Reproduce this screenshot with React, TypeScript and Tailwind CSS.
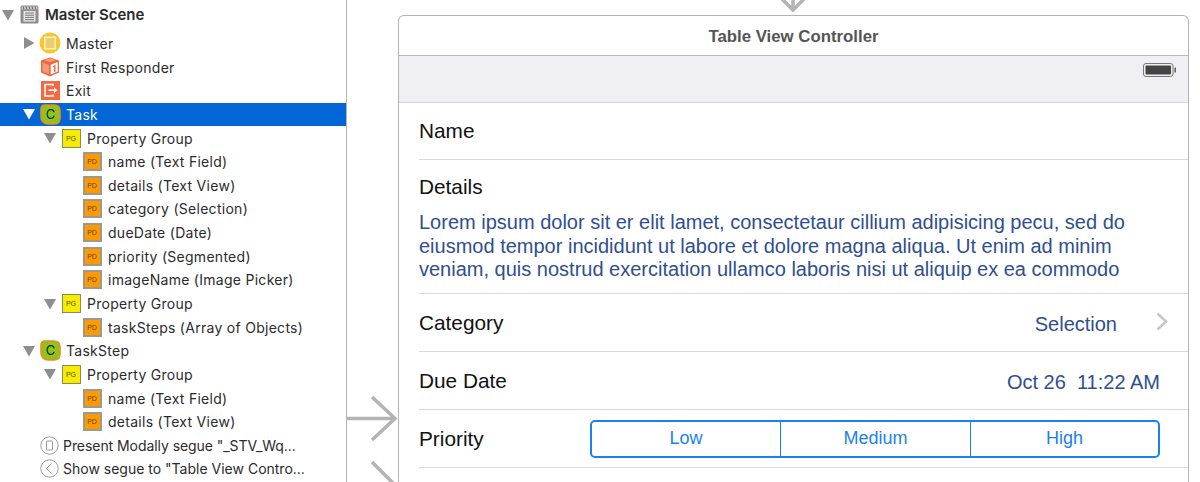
import type { ReactNode } from "react";

type RowProps = { indent: number; arrow?: "down" | "right"; light?: boolean; icon: ReactNode; label: string; selected?: boolean; bold?: boolean };

function Arrow({ dir, light }: { dir: "down" | "right"; light?: boolean }) {
  const fill = light ? "#ffffff" : "#8e8e8e";
  return (
    <svg width="12" height="12" viewBox="0 0 12 12" className="shrink-0">
      {dir === "down" ? <path d="M0 1H12L6 11.5Z" fill={fill} /> : <path d="M1 0V12L11.5 6Z" fill={fill} />}
    </svg>
  );
}

function SceneIcon() {
  return (
    <svg width="19" height="19" viewBox="0 0 19 19">
      <rect x="0.5" y="0.5" width="18" height="18" rx="1.5" fill="#8d8d8d" />
      <path d="M1.5 1.5h16v3h-16z" fill="#c9c9c9" />
      <path d="M3 1.5l1 3M6 1.5l1 3M9 1.5l1 3M12 1.5l1 3M15 1.5l1 3" stroke="#666" strokeWidth="1" />
      <rect x="3.5" y="6" width="12" height="10.5" fill="#e6e6e6" />
      <path d="M5 8h9M5 10.2h9M5 12.4h9M5 14.6h9" stroke="#777" strokeWidth="1" />
    </svg>
  );
}

function MasterIcon() {
  return (
    <svg width="22" height="22" viewBox="0 0 22 22">
      <circle cx="11" cy="11" r="10.5" fill="#fbc52c" />
      <rect x="5" y="4.5" width="12" height="13" fill="#fdf3c0" />
      <path d="M6.5 7h9M6.5 9h9M6.5 11h9M6.5 13h9M6.5 15h9" stroke="#d9a520" strokeWidth="1" />
    </svg>
  );
}

function ResponderIcon() {
  return (
    <svg width="20" height="20" viewBox="0 0 19 20">
      <path d="M9.5 0.5L18.5 3.5V15.5L9.5 19.5L0.5 15.5V3.5Z" fill="#f2673c" />
      <path d="M2 5.5L8.5 8V17L2 14.5Z" fill="#f79a78" />
      <path d="M3.5 3L9.5 1.2L15.5 3L9.5 5.3Z" fill="#f79a78" />
      <path d="M10.2 7.8L17.2 5V14.6L10.2 17.6Z" fill="#fff" />
      <path d="M12.6 10l1.7-1.1V15" stroke="#f2673c" strokeWidth="1.4" fill="none" />
    </svg>
  );
}

function ExitIcon() {
  return (
    <svg width="19" height="19" viewBox="0 0 19 19">
      <rect width="19" height="19" fill="#f4693f" />
      <path d="M12 5V3.5H4V15H12V13.5" stroke="#fff" strokeWidth="1.5" fill="none" />
      <path d="M7.5 9.2H14" stroke="#fff" strokeWidth="1.6" />
      <path d="M13 6.5L16.5 9.2L13 12Z" fill="#fff" />
    </svg>
  );
}

function ClassIcon() {
  return (
    <svg width="21" height="21" viewBox="0 0 21 21">
      <path d="M5 1H14C18 1 20 3.5 20 7V14C20 18 17.5 20 14 20H8C4 20 1 17 1 13V5C1 2.5 2.5 1 5 1Z" fill="#8fc31f" stroke="#f28a1e" strokeWidth="1.6" />
      <text x="10.5" y="15" textAnchor="middle" fontSize="13" fill="#1c2a05" fontFamily="Inter, sans-serif">C</text>
    </svg>
  );
}

function BoxIcon({ text, big }: { text: string; big?: boolean }) {
  return (
    <div className={big ? "flex h-[19px] w-[19px] shrink-0 items-center justify-center border border-[#8a8a5a] bg-[#f5ec00]" : "flex h-[19px] w-[19px] shrink-0 items-center justify-center border-2 border-[#9a9a8e] bg-[#ff9900]"}>
      <span className="font-['Liberation_Sans',sans-serif] text-[7px] leading-none tracking-normal text-[#5a4a10]">{text}</span>
    </div>
  );
}

function SegueIcon({ back }: { back?: boolean }) {
  return (
    <svg width="19" height="19" viewBox="0 0 19 19" className="shrink-0">
      <circle cx="9.5" cy="9.5" r="8.7" fill="#fff" stroke="#9a9a9a" strokeWidth="1" />
      {back ? <path d="M11.5 4.5L6.5 9.5L11.5 14.5" stroke="#9a9a9a" fill="none" /> : <rect x="6.5" y="5" width="6" height="9" rx="0.5" fill="none" stroke="#9a9a9a" />}
    </svg>
  );
}

function Row({ indent, arrow, light, icon, label, selected, bold }: RowProps) {
  return (
    <div className={selected ? "flex h-[23.65px] items-center bg-[#0366d6] text-white" : "flex h-[23.65px] items-center text-[#2b2b2b]"}>
      <div className="flex w-[14px] shrink-0 justify-center" style={{ marginLeft: indent }}>
        {arrow && <Arrow dir={arrow} light={light} />}
      </div>
      <div className="ml-[3px] flex w-[22px] shrink-0 items-center justify-center">{icon}</div>
      <span className={bold ? "ml-[5px] truncate text-[15px] font-semibold tracking-[-0.05px]" : "ml-[5px] truncate text-[14px] tracking-[0.28px]"}>{label}</span>
    </div>
  );
}

function Outline() {
  return (
    <div className="h-[482px] w-[347px] shrink-0 overflow-hidden border-r border-[#b5b5b5] bg-white pt-[3px] font-['Inter',sans-serif]">
      <div className="mb-[5px]">
        <Row indent={1} arrow="down" icon={<SceneIcon />} label="Master Scene" bold />
      </div>
      <Row indent={22} arrow="right" icon={<MasterIcon />} label="Master" />
      <Row indent={22} icon={<ResponderIcon />} label="First Responder" />
      <Row indent={22} icon={<ExitIcon />} label="Exit" />
      <Row indent={22} arrow="down" light icon={<ClassIcon />} label="Task" selected />
      <Row indent={43} arrow="down" icon={<BoxIcon text="PG" big />} label="Property Group" />
      <Row indent={64} icon={<BoxIcon text="PD" />} label="name (Text Field)" />
      <Row indent={64} icon={<BoxIcon text="PD" />} label="details (Text View)" />
      <Row indent={64} icon={<BoxIcon text="PD" />} label="category (Selection)" />
      <Row indent={64} icon={<BoxIcon text="PD" />} label="dueDate (Date)" />
      <Row indent={64} icon={<BoxIcon text="PD" />} label="priority (Segmented)" />
      <Row indent={64} icon={<BoxIcon text="PD" />} label="imageName (Image Picker)" />
      <Row indent={43} arrow="down" icon={<BoxIcon text="PG" big />} label="Property Group" />
      <Row indent={64} icon={<BoxIcon text="PD" />} label="taskSteps (Array of Objects)" />
      <Row indent={22} arrow="down" icon={<ClassIcon />} label="TaskStep" />
      <Row indent={43} arrow="down" icon={<BoxIcon text="PG" big />} label="Property Group" />
      <Row indent={64} icon={<BoxIcon text="PD" />} label="name (Text Field)" />
      <Row indent={64} icon={<BoxIcon text="PD" />} label="details (Text View)" />
      <div className="flex h-[23.65px] items-center pl-[40px] text-[14px] tracking-[-0.06px] text-[#2b2b2b]">
        <SegueIcon />
        <span className="ml-[4px]">Present Modally segue "_STV_Wq...</span>
      </div>
      <div className="flex h-[23.65px] items-center pl-[40px] text-[14px] text-[#2b2b2b]">
        <SegueIcon back />
        <span className="ml-[4px]">Show segue to "Table View Contro...</span>
      </div>
    </div>
  );
}

function Battery() {
  return (
    <svg width="34" height="14" viewBox="0 0 34 14">
      <rect x="0.5" y="0.5" width="29.5" height="13" rx="2.5" fill="#efeff4" stroke="#777" />
      <rect x="2.5" y="2.5" width="25.5" height="9" rx="1" fill="#444" />
      <rect x="31.4" y="4.5" width="1.6" height="5" fill="#666" />
    </svg>
  );
}

function Cell({ children, h }: { children: ReactNode; h: string }) {
  return <div className={`flex items-center border-b border-[#d9d9d9] pr-[28px] ${h}`}>{children}</div>;
}

function Device() {
  return (
    <div className="h-[520px] w-[791px] shrink-0 overflow-hidden rounded-t-[6px] border border-b-0 border-[#b4b4b4] bg-white font-['Liberation_Sans',sans-serif]">
      <div className="flex h-[40px] items-center justify-center border-b border-[#b9b9b9] pt-[2px] text-[16.8px] font-bold text-[#555555]">
        Table View Controller
      </div>
      <div className="flex h-[47px] justify-end border-b border-[#d6d6d9] bg-[#efeff4] pr-[11px] pt-[7px]">
        <Battery />
      </div>
      <div className="ml-[20px] text-[20.8px] text-[#111111]">
        <Cell h="h-[57px]">Name</Cell>
        <div className="h-[134px] border-b border-[#d9d9d9] pt-[15px]">
          <div className="leading-[24px]">Details</div>
          <p className="mt-[12px] text-[20px] leading-[23.7px] whitespace-pre text-[#2f4f8f]">
            {"Lorem ipsum dolor sit er elit lamet, consectetaur cillium adipisicing pecu, sed do\neiusmod tempor incididunt ut labore et dolore magna aliqua. Ut enim ad minim\nveniam, quis nostrud exercitation ullamco laboris nisi ut aliquip ex ea commodo"}
          </p>
        </div>
        <Cell h="h-[58px] justify-between !pr-[20px]">
          <span>Category</span>
          <span className="flex items-center text-[20px] text-[#2f4f8f]">
            <span className="mt-[2px]">Selection</span>
            <svg width="12" height="19" viewBox="0 0 12 19" className="ml-[39px] mb-[2px]">
              <path d="M1.5 1.5L10 9.5L1.5 17.5" stroke="#c7c7cc" strokeWidth="2.6" fill="none" />
            </svg>
          </span>
        </Cell>
        <Cell h="h-[58px] justify-between">
          <span>Due Date</span>
          <span className="mt-[2px] whitespace-pre text-[20px] text-[#2f4f8f]">Oct 26  11:22 AM</span>
        </Cell>
        <Cell h="h-[58px] justify-between">
          <span>Priority</span>
          <div className="flex h-[38px] w-[570px] rounded-[5px] border-2 border-[#1a82f0] text-[18px] text-[#1a82f0]">
            <div className="flex w-[188px] items-center justify-center">Low</div>
            <div className="flex w-[191px] items-center justify-center border-x border-[#1a82f0]">Medium</div>
            <div className="flex flex-1 items-center justify-center">High</div>
          </div>
        </Cell>
      </div>
    </div>
  );
}

function Canvas() {
  return (
    <div className="relative h-[482px] flex-1 overflow-hidden bg-white pl-[51px] pt-[15px]">
      <Device />
      {/* segue arrows on the storyboard */}
      <svg className="absolute left-0 top-0" width="853" height="482" viewBox="0 0 853 482">
        <path d="M0 418.500H47M25 397L48 418.500L25 440" stroke="#b3b3b3" strokeWidth="3.500" fill="none" />
        <path d="M25 462L47 484" stroke="#b3b3b3" strokeWidth="3.500" fill="none" />
        <path d="M446 0V10" stroke="#b3b3b3" strokeWidth="3.500" fill="none" />
        <path d="M435 -1L446 10L457 -1" stroke="#b3b3b3" strokeWidth="3.500" fill="none" />
      </svg>
    </div>
  );
}

export default function App() {
  return (
    <div className="flex h-[482px] w-[1200px] overflow-hidden bg-white">
      <Outline />
      <Canvas />
    </div>
  );
}
